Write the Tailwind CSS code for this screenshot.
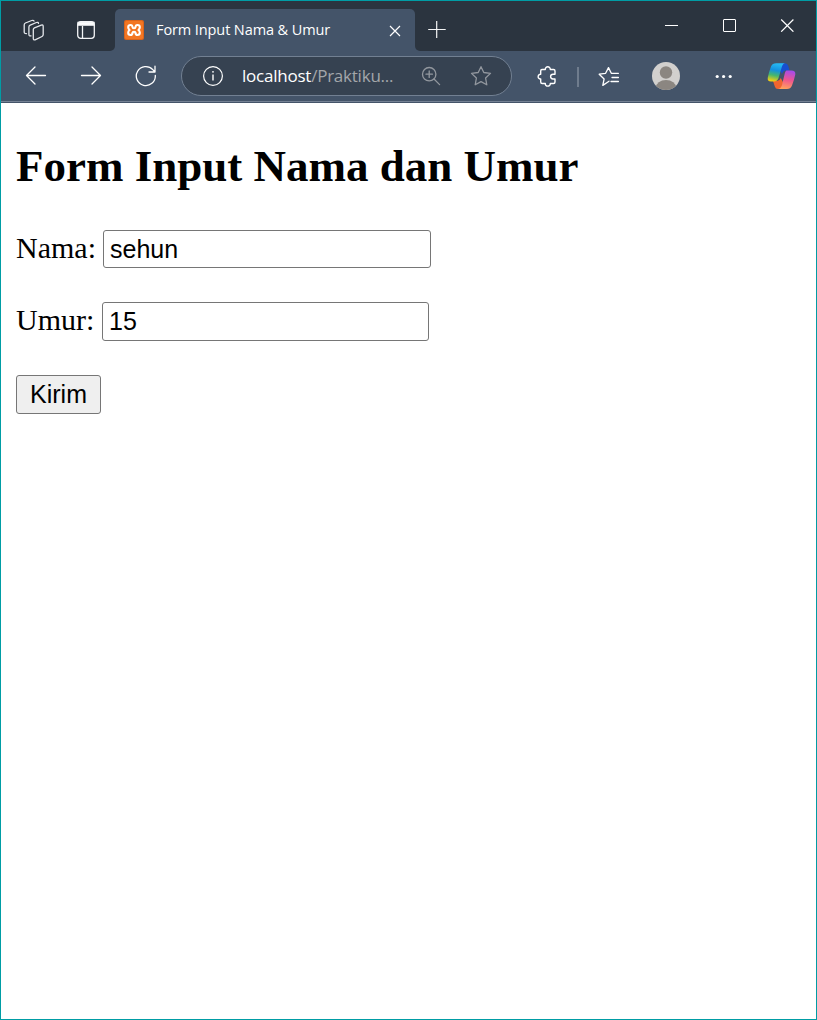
<!DOCTYPE html>
<html lang="id">
<head>
<meta charset="utf-8">
<title>Form Input Nama &amp; Umur</title>
<script src="https://cdn.jsdelivr.net/npm/@tailwindcss/browser@4"></script>
</head>
<body class="bg-white">
<div class="flex h-[1020px] w-[817px] flex-col overflow-hidden border border-[#009da5] bg-white">
  <!-- title bar -->
  <header class="flex h-[50px] shrink-0 items-start bg-[#445469] text-white">
    <div class="flex h-[50px] w-[114px] shrink-0 items-center rounded-br-[5px] bg-[#2b343f]">
      <svg class="ml-[21px] mt-[9px] h-[24px] w-[24px]" viewBox="0 0 24 24" fill="none" stroke="#e4e7eb" stroke-width="1.3" stroke-linejoin="round" stroke-linecap="round">
        <path d="M11.3 10.6Q11.3 9.4 12.4 8.9L19.3 6.1Q21.2 5.5 21.2 7.4V15.6Q21.2 16.9 20 17.5L13.1 20.8Q11.3 21.4 11.3 19.5Z"/>
        <path d="M9 16.8Q6.9 17.3 6.9 15.5V8Q6.9 6.7 8.2 6.1L14.4 3.5Q16.3 2.9 16.5 4.4"/>
        <path d="M4.5 14.6Q2.2 14.8 2.2 13V5.9Q2.2 4.5 3.4 4L9.7 1.5Q11.5 .9 12 2.1"/>
      </svg>
      <svg class="ml-[30px] mt-[8px] h-[20px] w-[20px]" viewBox="0 0 20 20" fill="none" stroke="#f2f4f6" stroke-width="1.3">
        <rect x="1.7" y="1.7" width="16.6" height="16.6" rx="3"/><path d="M2 2.5H18V5.2H2Z" fill="#fff"/><path d="M6.5 6V18"/>
      </svg>
    </div>
    <div class="flex h-[50px] w-[300px] shrink-0 flex-col bg-[#2b343f] pt-[8px]">
      <div class="flex h-[42px] w-[300px] items-center rounded-t-[5px] bg-[#445469]">
        <svg class="ml-[9px] h-[20px] w-[20px]" viewBox="0 0 20 20">
          <rect width="20" height="20" rx="2" fill="#d9641c"/><rect x="1" y="1" width="18" height="18" rx="1.5" fill="#f37623"/>
          <path d="M8.6 7.4Q8.4 5 6.5 5Q4.2 5 4.2 7.2Q4.2 9 5.6 10Q4.2 11 4.2 12.8Q4.2 15 6.5 15Q8.4 15 8.6 12.6M11.4 7.4Q11.6 5 13.5 5Q15.8 5 15.8 7.2Q15.8 9 14.4 10Q15.8 11 15.8 12.8Q15.8 15 13.5 15Q11.6 15 11.4 12.6M8.6 7.2Q8.6 8.2 10 8.2Q11.4 8.2 11.4 7.2M8.6 12.8Q8.6 11.8 10 11.8Q11.4 11.8 11.4 12.8" fill="none" stroke="#fff" stroke-width="2.1" stroke-linejoin="round"/>
        </svg>
        <span class="ml-[12px] w-[232px] whitespace-nowrap font-['Open_Sans',sans-serif] text-[14.5px] leading-5 tracking-[-0.1px]">Form Input Nama &amp; Umur</span>
        <svg class="mr-[13px] mt-[1px] h-[14px] w-[14px] shrink-0" viewBox="0 0 14 14" stroke="#fff" stroke-width="1.2"><path d="M2 2L12 12M12 2L2 12"/></svg>
      </div>
    </div>
    <div class="flex h-[50px] grow items-start rounded-bl-[5px] bg-[#2b343f]">
      <svg class="ml-[12px] mt-[19px] h-[20px] w-[20px] shrink-0" viewBox="0 0 20 20" stroke="#f4f5f6" stroke-width="1.2"><path d="M1.2 9.5H18.7M9.7 1V18"/></svg>
      <div class="ml-auto mr-[22px] mt-[17px] flex items-center gap-[44px]">
        <svg class="h-[14px] w-[14px]" viewBox="0 0 14 14" stroke="#fff"><path d="M1 7.5H14"/></svg>
        <svg class="h-[14px] w-[14px]" viewBox="0 0 14 14" stroke="#fff" fill="none"><rect x="1.5" y="1.5" width="12" height="12" rx=".5"/></svg>
        <svg class="h-[14px] w-[14px]" viewBox="0 0 14 14" stroke="#fff" stroke-width="1.2"><path d="M1.2 1.5L13.4 13.7M13.4 1.5L1.2 13.7"/></svg>
      </div>
    </div>
  </header>

  <!-- toolbar -->
  <nav class="flex h-[52px] shrink-0 items-start border-b border-[#445469] bg-[#445469] shadow-[inset_0_-1px_0_#758294]">
    <svg class="ml-[24px] mt-[14px] h-[22px] w-[22px] shrink-0" viewBox="0 0 22 22" fill="none" stroke="#fff" stroke-width="1.3" stroke-linecap="round" stroke-linejoin="round"><path d="M20.5 10.5H1.5M10 2L1.5 10.5L10 19"/></svg>
    <svg class="ml-[33px] mt-[14px] h-[22px] w-[22px] shrink-0" viewBox="0 0 22 22" fill="none" stroke="#fff" stroke-width="1.3" stroke-linecap="round" stroke-linejoin="round"><path d="M1.5 10.5H20.5M12 2L20.5 10.5L12 19"/></svg>
    <svg class="ml-[33px] mt-[14px] h-[22px] w-[22px] shrink-0" viewBox="0 0 22 22" fill="none" stroke="#fff" stroke-width="1.3" stroke-linecap="round" stroke-linejoin="round"><path d="M20.3 10.5A9.5 9.5 0 1 1 17.8 4.6L19.8 6.8M20 1.2V7H14"/></svg>
    <div class="ml-[24px] mt-[5px] flex h-[40px] w-[331px] shrink-0 items-center rounded-full border border-[#728092] bg-[#364251]">
      <svg class="ml-[20px] h-[22px] w-[22px]" viewBox="0 0 22 22" fill="none" stroke="#fff" stroke-width="1.2"><circle cx="11" cy="11" r="9.4"/><path d="M11 9.5V15.5" stroke-width="1.4"/><circle cx="11" cy="6.8" r=".9" fill="#fff" stroke="none"/></svg>
      <span class="ml-[18px] w-[157px] whitespace-nowrap font-['Open_Sans',sans-serif] text-[17px] leading-6 tracking-[-0.23px] text-[#a3a6aa]"><span class="text-white">localhost</span>/Praktiku...</span>
      <svg class="ml-[22px] h-[20px] w-[20px]" viewBox="0 0 20 20" fill="none" stroke="#92979e" stroke-width="1.3" stroke-linecap="round"><circle cx="8.2" cy="8.2" r="6.7"/><path d="M13 13L18.6 18.6M8.2 5V11.4M5 8.2H11.4"/></svg>
      <svg class="ml-[29px] h-[22px] w-[22px]" viewBox="0 0 22 22" fill="none" stroke="#92979e" stroke-width="1.3" stroke-linejoin="round"><path d="M11 1.7L13.8 7.5L20.5 8.4L15.6 13L16.8 19.8L11 16.6L5.2 19.8L6.4 13L1.5 8.4L8.2 7.5Z"/></svg>
    </div>
    <svg class="ml-[25px] mt-[14px] h-[22px] w-[22px] shrink-0" viewBox="0 0 22 22" fill="none" stroke="#fff" stroke-width="1.4" stroke-linejoin="round"><path d="M5 4.5H8.3C8 .9 13.5.9 13.3 4.5H16.5Q18 4.5 18 6V9.2H16C12.8 9.2 12.8 14 16 14H18V17Q18 18.5 16.5 18.5H13.3C13.5 22 8 22 8.3 18.5H5.2Q3.7 18.5 3.7 17V14C.3 14.3.3 9 3.7 9.3V6Q3.7 4.5 5 4.5Z"/></svg>
    <div class="ml-[18px] mt-[16px] h-[20px] w-[2px] shrink-0 bg-[#6f7c8d]"></div>
    <svg class="ml-[19px] mt-[15px] h-[22px] w-[22px] shrink-0" viewBox="0 0 22 22" fill="none" stroke="#fff" stroke-width="1.3" stroke-linejoin="round" stroke-linecap="round"><path d="M9.5 16.2L4.8 19.4L6.1 13L1.2 8.2L7.6 7.3L10.5 1.6L13.3 7.3H20.4M14 11.5H20.4M13 15.5H20.4M9.5 16.2L11 15.2"/></svg>
    <svg class="ml-[32px] mt-[11px] h-[28px] w-[28px] shrink-0" viewBox="0 0 28 28"><clipPath id="av"><circle cx="14" cy="14" r="14"/></clipPath><g clip-path="url(#av)"><path fill="#d2d0ce" d="M0 0H28V28H0Z"/><circle cx="14" cy="10.5" r="6.2" fill="#8b8681"/><ellipse cx="14" cy="25.8" rx="10.2" ry="7.8" fill="#8b8681"/></g></svg>
    <svg class="ml-[35px] mt-[21px] h-[8px] w-[18px] shrink-0" viewBox="0 0 18 8" fill="#fff"><circle cx="2.2" cy="4.5" r="1.6"/><circle cx="8.6" cy="4.5" r="1.6"/><circle cx="15.2" cy="4.5" r="1.6"/></svg>
    <svg class="ml-[34px] mt-[11px] h-[28px] w-[29px] shrink-0" viewBox="0 0 29 28">
      <defs>
        <linearGradient id="a" x1=".6" y1="0" x2=".4" y2="1"><stop offset="0" stop-color="#28bdf4"/><stop offset=".4" stop-color="#1491df"/><stop offset=".68" stop-color="#45b66f"/><stop offset="1" stop-color="#f4cf12"/></linearGradient>
        <linearGradient id="b" x1=".6" y1="0" x2=".4" y2="1"><stop offset="0" stop-color="#a64bea"/><stop offset=".5" stop-color="#ef568f"/><stop offset="1" stop-color="#ffa15b"/></linearGradient>
      </defs>
      <path d="M13 1.2H18Q20.5 1.2 21.3 4L22.5 8.5H18.5Q16.2 8.5 15 12L12 6Z" fill="#174fd0"/>
      <path d="M6 19H10Q12.5 19 13.8 16L17.5 23Q16 27 13.5 27H11Q8.5 27 7.8 24.5Z" fill="#f0652f"/>
      <path d="M9.2 1.2H18.2Q15.8 1.5 14.8 5L11.4 16.5Q10.2 19.5 7 19.5H4Q0 19.5 .8 15.5Q2.1 9.5 4 4.5Q5.4 1.2 9.2 1.2Z" fill="url(#a)"/>
      <path d="M19.7 8.5H24.3Q28.8 8.5 28.3 12.5Q27 18.5 25 23.5Q23.6 27 20 27H11.2Q14 26.5 15 23L17.5 12.5Q18.4 8.5 19.7 8.5Z" fill="url(#b)"/>
    </svg>
  </nav>

  <!-- page content -->
  <main class="flex flex-col pl-[15px] font-['Liberation_Serif',serif] text-black">
    <h2 class="mt-[37px] whitespace-nowrap text-[45px] font-bold leading-[52px]">Form Input Nama dan Umur</h2>
    <form class="flex flex-col items-start text-[30px] leading-[36px]">
      <div class="mt-[38px] flex h-[38px] items-start">
        <label for="nama" class="w-[87px]">Nama:</label>
        <input id="nama" value="sehun" class="h-[38px] w-[328px] rounded-[3px] border border-[#767676] bg-white px-[6px] font-['Liberation_Sans',sans-serif] text-[25px]">
      </div>
      <div class="mt-[34px] flex h-[39px] items-start">
        <label for="umur" class="w-[86px]">Umur:</label>
        <input id="umur" value="15" class="h-[39px] w-[327px] rounded-[3px] border border-[#767676] bg-white px-[6px] pb-[1px] font-['Liberation_Sans',sans-serif] text-[25px]">
      </div>
      <button type="button" class="mt-[34px] flex h-[39px] w-[85px] items-center justify-center rounded-[3px] border border-[#767676] bg-[#efefef] pb-[2px] font-['Liberation_Sans',sans-serif] text-[25px]">Kirim</button>
    </form>
  </main>
</div>
</body>
</html>
